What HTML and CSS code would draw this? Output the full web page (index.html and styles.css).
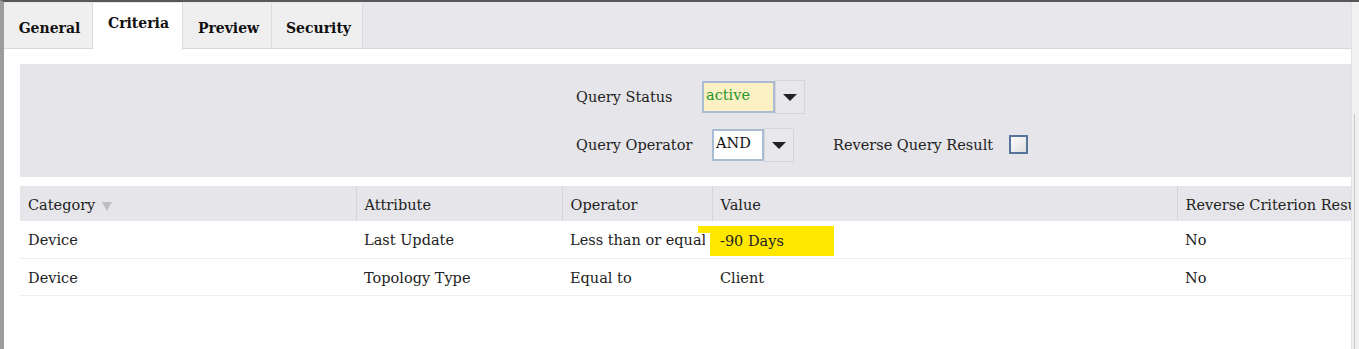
FILE: index.html
```html
<!DOCTYPE html>
<html lang="en">
<head>
    <meta charset="UTF-8">
    <title>Query Criteria</title>
    <link rel="stylesheet" href="styles.css">
</head>
<body>
    <div class="window">
        <div class="main">
            <div class="tabs">
                <div class="tab">General</div>
                <div class="tab active">Criteria</div>
                <div class="tab">Preview</div>
                <div class="tab tab-last">Security</div>
            </div>
            <div class="content">
                <div class="query-panel">
                    <div class="query-row">
                        <span class="q-label status-label">Query Status</span>
                        <div class="combo">
                            <div class="combo-input status-input">active</div>
                            <div class="combo-btn"><span class="arrow"></span></div>
                        </div>
                    </div>
                    <div class="query-row">
                        <span class="q-label operator-label">Query Operator</span>
                        <div class="combo">
                            <div class="combo-input operator-input">AND</div>
                            <div class="combo-btn"><span class="arrow"></span></div>
                        </div>
                        <span class="q-label reverse-label">Reverse Query Result</span>
                        <span class="checkbox"></span>
                    </div>
                </div>

                <table class="criteria">
                    <colgroup>
                        <col class="col-category">
                        <col class="col-attribute">
                        <col class="col-operator">
                        <col class="col-value">
                        <col class="col-reverse">
                    </colgroup>
                    <thead>
                        <tr>
                            <th>Category <span class="sort-arrow"></span></th>
                            <th>Attribute</th>
                            <th>Operator</th>
                            <th>Value</th>
                            <th><div class="clip">Reverse Criterion Result</div></th>
                        </tr>
                    </thead>
                    <tbody>
                        <tr>
                            <td>Device</td>
                            <td>Last Update</td>
                            <td class="op-cell"><div class="clip">Less than or equal</div></td>
                            <td><span class="highlight">-90 Days</span></td>
                            <td>No</td>
                        </tr>
                        <tr>
                            <td>Device</td>
                            <td>Topology Type</td>
                            <td class="op-cell"><div class="clip">Equal to</div></td>
                            <td>Client</td>
                            <td>No</td>
                        </tr>
                    </tbody>
                </table>
            </div>
        </div>
        <div class="scrollbar"><div class="scroll-thumb"></div></div>
    </div>
</body>
</html>
```

FILE: styles.css
```css
body {
    margin: 0;
    background: #fff;
    font-family: "DejaVu Serif", "Liberation Serif", serif;
    font-size: 14.5px;
    color: #222;
    overflow: hidden;
}
.window {
    display: flex;
    height: 349px;
    box-sizing: border-box;
    border-top: 2px solid #585858;
    border-left: 4px solid #9c9c9c;
}
.main {
    flex: 1;
    min-width: 0;
}
.scrollbar {
    width: 7px;
    background: #f1f1f1;
    border-left: 1px solid #e2e2e2;
    display: flex;
    flex-direction: column;
    justify-content: flex-end;
}
.scroll-thumb {
    height: 235px;
    border-left: 1px solid #c9c9c9;
    margin-left: 2px;
}

/* tabs */
.tabs {
    display: flex;
    height: 47px;
    box-sizing: border-box;
    background: #e8e8ec;
    border-bottom: 1px solid #d9d9dd;
}
.tab {
    width: 89px;
    margin-top: 1px;
    height: 45px;
    box-sizing: border-box;
    background: #efefef;
    border-right: 1px solid #dcdcdc;
    font-weight: bold;
    font-size: 14px;
    color: #111;
    display: flex;
    align-items: center;
    justify-content: center;
    padding: 4px 0 0 3px;
}
.tab.active {
    width: 90px;
    height: 47px;
    background: #fff;
    padding: 0 0 8px 2px;
}
.tab-last {
    width: 91px;
}

/* query options */
.content {
    padding: 15px 0 0 16px;
}
.query-panel {
    background: #e6e6ea;
    height: 113px;
    box-sizing: border-box;
    padding: 16px 0 0 556px;
    display: flex;
    flex-direction: column;
    gap: 14px;
}
.query-row {
    display: flex;
    align-items: center;
    height: 34px;
}
.status-label {
    width: 126px;
}
.operator-label {
    width: 136px;
}
.reverse-label {
    margin-left: 39px;
    margin-right: 16px;
}
.combo {
    display: flex;
    align-items: center;
}
.combo-input {
    height: 32px;
    box-sizing: border-box;
    border: 2px solid #a9bcd3;
    padding: 0 2px 4px;
    display: flex;
    align-items: center;
}
.status-input {
    width: 73px;
    background: #fcf1c5;
    color: #27962a;
}
.operator-input {
    width: 52px;
    background: #fff;
    color: #111;
}
.combo-btn {
    width: 30px;
    height: 34px;
    box-sizing: border-box;
    background: #e8e8ec;
    border: 1px solid #d6d6da;
    display: flex;
    align-items: center;
    justify-content: center;
}
.arrow {
    width: 0;
    height: 0;
    border-left: 7px solid transparent;
    border-right: 7px solid transparent;
    border-top: 7px solid #222;
}
.checkbox {
    width: 19px;
    height: 19px;
    box-sizing: border-box;
    border: 2px solid #56739a;
    background: linear-gradient(135deg, #fdfdfd, #dedede);
    margin-top: -2px;
}

/* criteria table */
.criteria {
    margin-top: 9px;
    width: 1332px;
    table-layout: fixed;
    border-collapse: collapse;
}
.col-category { width: 336px; }
.col-attribute { width: 206px; }
.col-operator { width: 150px; }
.col-value { width: 465px; }
.col-reverse { width: 175px; }
.criteria th {
    height: 35px;
    box-sizing: border-box;
    background: #e6e6ea;
    font-weight: normal;
    text-align: left;
    padding: 2px 0 0 8px;
    border-left: 1px solid #d6d6da;
    white-space: nowrap;
}
.criteria th:first-child {
    border-left: none;
}
.criteria td {
    height: 37px;
    box-sizing: border-box;
    padding: 2px 10px 0 8px;
    border-bottom: 1px solid #eeeeee;
    white-space: nowrap;
}
.criteria td.op-cell {
    padding-right: 7px;
}
.clip {
    overflow: hidden;
}
.sort-arrow {
    display: inline-block;
    width: 0;
    height: 0;
    border-left: 5px solid transparent;
    border-right: 5px solid transparent;
    border-top: 9px solid #bdbdc2;
    margin-left: 2px;
    vertical-align: -1px;
}
.highlight {
    position: relative;
    display: inline-block;
    background: #ffe700;
    margin-left: -10px;
    padding: 0 50px 0 10px;
    line-height: 30px;
    margin-top: 1px;
}
.highlight::before {
    content: "";
    position: absolute;
    left: -12px;
    top: 0;
    width: 12px;
    height: 7px;
    background: #ffe700;
}
```
